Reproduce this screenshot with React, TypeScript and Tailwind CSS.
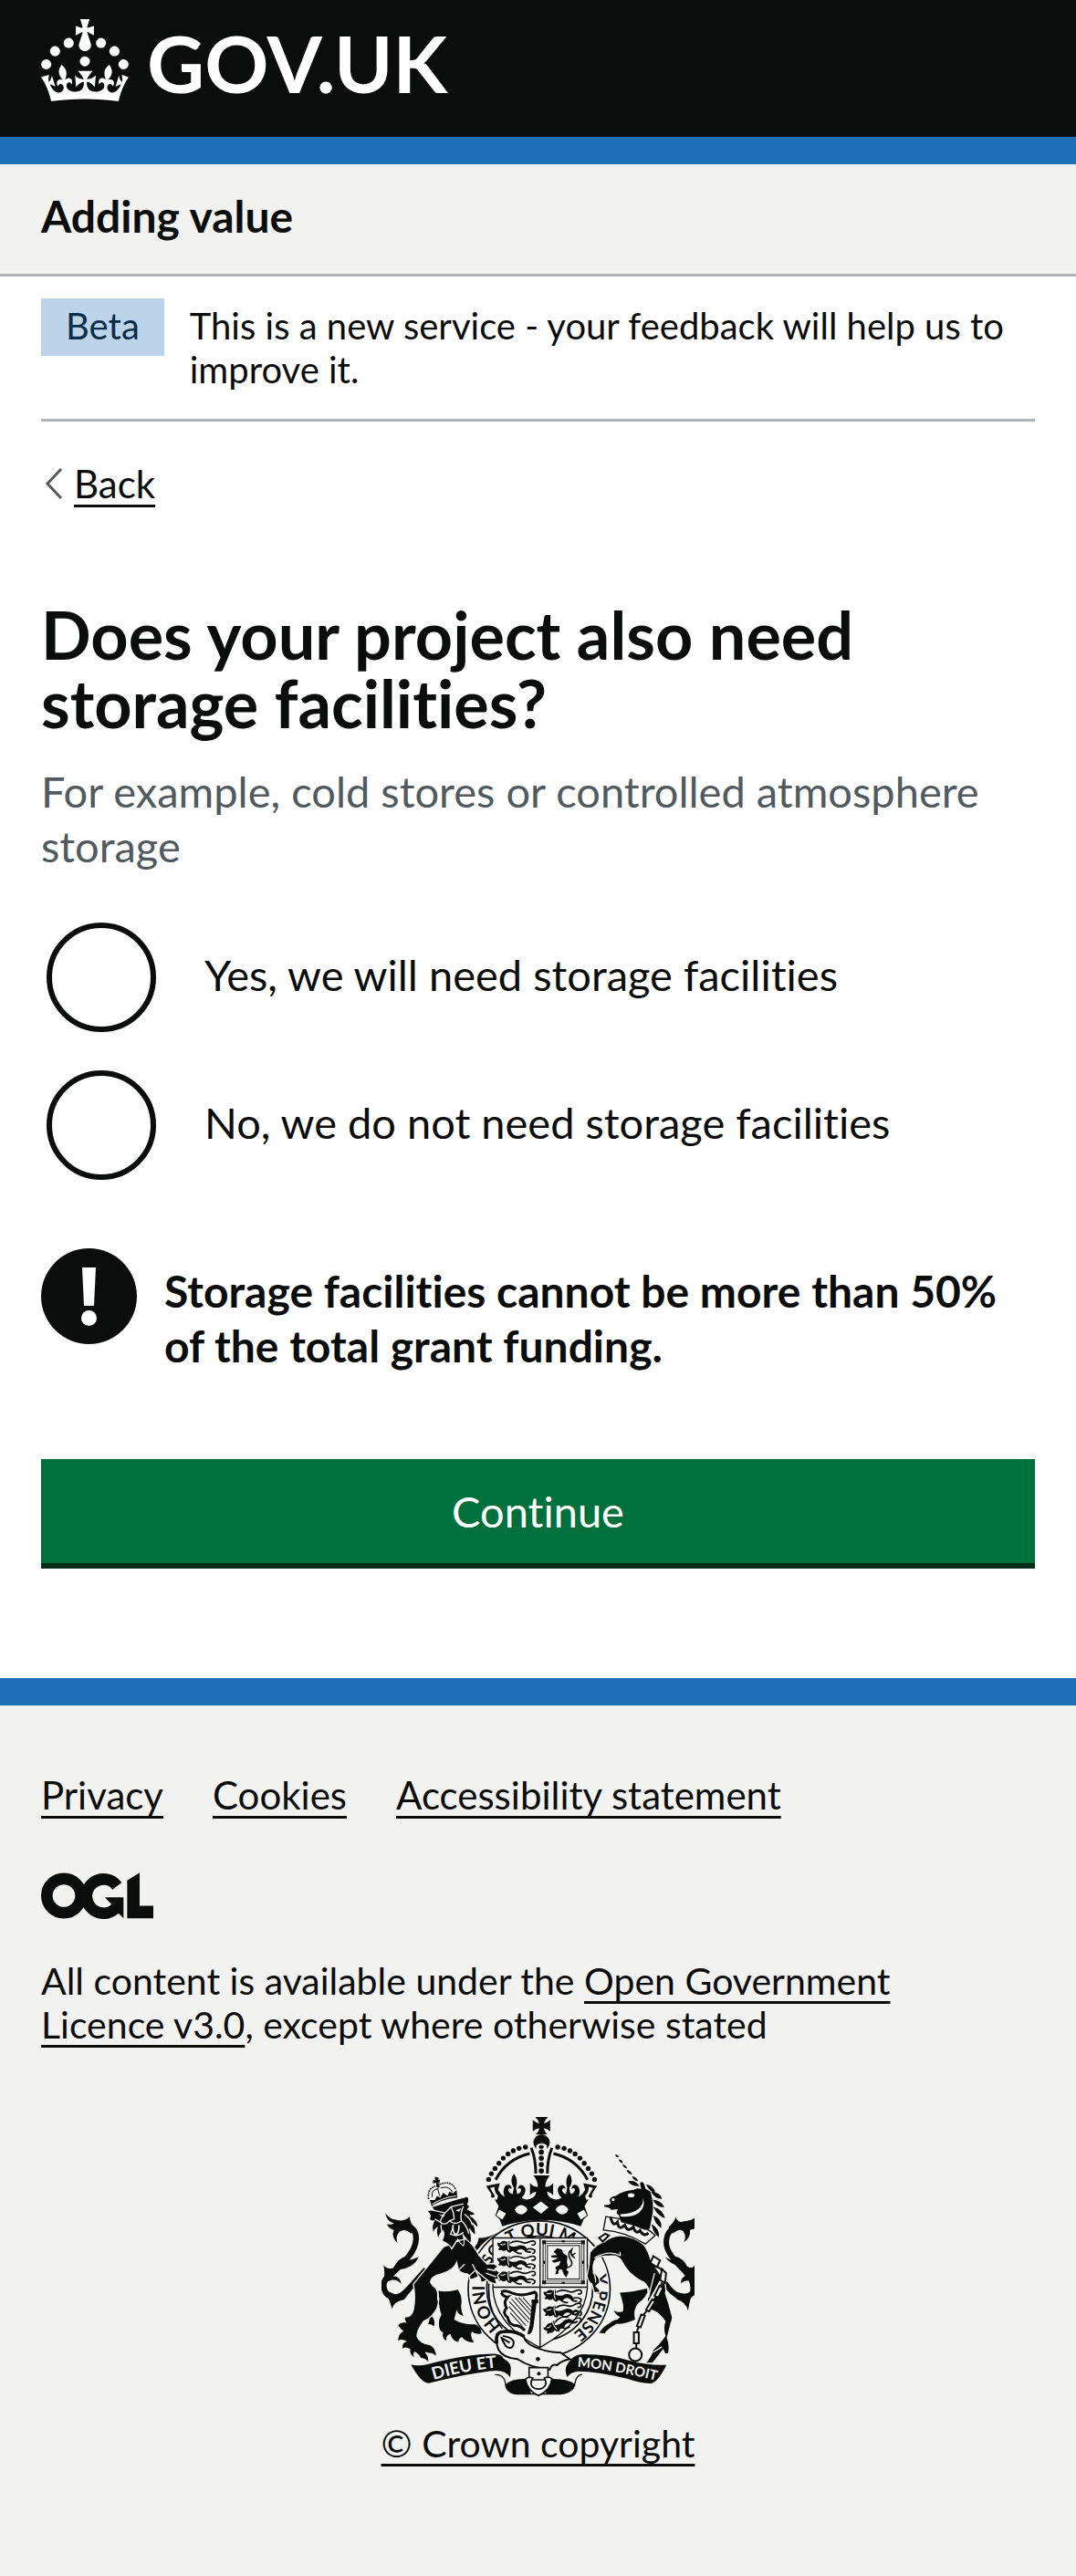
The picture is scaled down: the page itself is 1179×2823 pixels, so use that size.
import type { ReactNode } from 'react';

const INK = '#0b0c0c';
const PAPER = '#f2f2f0';

function CrownIcon() {
  return (
    <svg className="h-[90px] w-[96px] shrink-0" viewBox="0 0 32 30" fill="currentColor" aria-hidden="true">
      <path
        fillRule="evenodd"
        clipRule="evenodd"
        d="M22.6 10.4c-1 .4-2-.1-2.4-1-.4-.9.1-2 1-2.4.9-.4 2 .1 2.4 1s-.1 2-1 2.4m-5.9 6.7c-.9.4-2-.1-2.4-1-.4-.9.1-2 1-2.4.9-.4 2 .1 2.4 1s-.1 2-1 2.4m10.8-3.7c-1 .4-2-.1-2.4-1-.4-.9.1-2 1-2.4.9-.4 2 .1 2.4 1s0 2-1 2.4m3.3 4.8c-1 .4-2-.1-2.4-1-.4-.9.1-2 1-2.4.9-.4 2 .1 2.4 1s-.1 2-1 2.4M17 4.7l2.3 1.2V2.5l-2.3.7-.2-.2.9-3h-3.4l.9 3-.2.2c-.1.1-2.3-.7-2.3-.7v3.4L15 4.7c.1.1.1.2.2.2l-1.3 4c-.1.2-.1.4-.1.6 0 1.1.8 2 1.9 2.2h.7c1-.2 1.9-1.1 1.9-2.1 0-.2 0-.4-.1-.6l-1.3-4c-.1-.2 0-.2.1-.3m-7.6 5.7c.9.4 2-.1 2.4-1 .4-.9-.1-2-1-2.4-.9-.4-2 .1-2.4 1s0 2 1 2.4m-5 3c.9.4 2-.1 2.4-1 .4-.9-.1-2-1-2.4-.9-.4-2 .1-2.4 1s.1 2 1 2.4m-3.2 4.8c.9.4 2-.1 2.4-1 .4-.9-.1-2-1-2.4-.9-.4-2 .1-2.4 1s0 2 1 2.4m14.8 11c4.4 0 8.6.3 12.3.8 1.1-4.5 2.4-7 3.7-8.8l-2.5-.9c.2 1.3.3 1.9 0 2.7-.4-.4-.8-1.1-1.1-2.3l-1.2 4c.7-.5 1.3-.8 2-.9-1.1 2.5-2.6 3.1-3.5 3-1.1-.2-1.7-1.2-1.5-2.1.3-1.2 1.5-1.5 2.1-.1 1.1-2.3-.8-3-2-2.3 1.9-1.9 2.1-3.5.6-5.6-2.1 1.6-2.1 3.2-1.2 5.5-1.2-1.4-3.2-.6-2.5 1.6.9-1.4 2.1-.5 1.9.8-.2 1.1-1.7 2.1-3.5 1.9-2.7-.2-2.9-2.1-2.9-3.6.7-.1 1.9.5 2.9 1.9l.4-4.3c-1.1 1.1-2.1 1.4-3.2 1.4.4-1.2 2.1-3 2.1-3h-5.4s1.7 1.9 2.1 3c-1.1 0-2.1-.2-3.2-1.4l.4 4.3c1-1.4 2.2-2 2.9-1.9-.1 1.5-.2 3.4-2.9 3.6-1.9.2-3.4-.8-3.5-1.9-.2-1.3 1-2.2 1.9-.8.7-2.3-1.2-3-2.5-1.6.9-2.2.9-3.9-1.2-5.5-1.5 2-1.3 3.7.6 5.6-1.2-.7-3.1 0-2 2.3.6-1.4 1.8-1.1 2.1.1.2.9-.3 1.9-1.5 2.1-.9.2-2.4-.5-3.5-3 .6 0 1.2.3 2 .9l-1.2-4c-.3 1.1-.7 1.9-1.1 2.3-.3-.8-.2-1.4 0-2.7l-2.9.9C1.3 23 2.6 25.5 3.7 30c3.7-.5 7.9-.8 12.3-.8"
      />
    </svg>
  );
}

function OglLogo() {
  return (
    <svg className="h-[51px] w-[123px]" viewBox="15 36 369 152" role="img" aria-label="Open Government Licence">
      <g fill="none" stroke={INK} strokeWidth="38">
        <circle cx="90" cy="112" r="56" />
        <path d="M265 80A56 56 0 1 0 258 155" />
      </g>
      <path fill={INK} d="M225 117h61v69l-18-18-26-12 4-16z" />
      <path fill={INK} d="M298 62l41-26v109h45v41h-86z" />
    </svg>
  );
}

/* A lion passant, drawn three to a quarter on the shield. */
function Passant({ x, y, turn = 0 }: { x: number; y: number; turn?: number }) {
  return (
    <g transform={`translate(${x} ${y}) rotate(${turn})`}>
      <path
        fill={INK}
        d="M2 6Q10 10 14 4Q24 -2 32 4L42 0Q44 10 40 16Q52 22 66 18Q76 12 90 17Q100 22 98 32Q106 36 112 34L112 40Q96 42 90 32Q80 24 70 30Q64 40 50 34L44 40Q34 38 32 30Q22 38 14 30Q8 34 4 28Q10 26 8 20Q0 16 2 6Z"
      />
      <path
        fill="none"
        stroke={INK}
        strokeWidth="5"
        d="M44 8Q60 -2 78 4Q94 12 108 3Q124 -2 126 6Q128 16 114 14M58 34Q66 44 82 42M96 30Q114 22 125 32Q126 42 116 42"
      />
      <path fill="none" stroke={PAPER} strokeWidth="3" d="M38 2Q34 16 40 32M12 12Q20 16 28 10" />
    </g>
  );
}

function HalfCrown() {
  const pearls = [[526, 156], [505, 160], [486, 168], [469, 178], [453, 192], [439, 209], [426, 226], [414, 243], [405, 262]];
  return (
    <g>
      {pearls.map(([cx, cy]) => (
        <circle key={cx} cx={cx} cy={cy} r="8" fill={INK} />
      ))}
      <path d="M540 177Q464 195 428 263" fill="none" stroke={INK} strokeWidth="9" />
      <path d="M545 158Q560 195 560 243" fill="none" stroke={INK} strokeWidth="9" />
      <path
        fill={INK}
        d="M397 283L442 274L436 296Q444 312 458 320Q450 300 458 286Q464 278 474 280Q482 284 480 294Q474 288 470 294Q468 306 484 310L488 290Q472 266 488 243Q504 264 495 290L499 310Q514 306 511 294Q506 288 500 294Q502 280 513 280Q527 284 526 300Q524 312 514 322Q526 332 541 326Q560 320 561 302Q549 304 541 314L541 274Q553 288 567 286Q566 266 552 249H582V395Q510 396 450 416L441 393L427 381L438 350L426 330L430 316Q420 326 413 320L414 310Z"
      />
      <path fill={PAPER} d="M440 361L462 374L450 394L430 380ZM491 361Q500 345 514 346Q528 350 533 361Q524 376 511 377Q497 375 491 361Z" />
      <path fill={PAPER} d="M410 290L426 318L420 322L432 330L436 316Q424 304 424 286Z" />
    </g>
  );
}

function TopCrown() {
  return (
    <g>
      <circle cx="579" cy="141" r="27" fill={INK} />
      <path fill={INK} d="M558 57H600Q590 67 586 78Q597 77 607 67V104Q597 95 586 94Q588 105 598 114H560Q570 105 572 94Q561 95 550 104V67Q561 77 572 78Q569 67 558 57Z" />
      <path d="M562 150Q579 135 596 150L606 244H552Z" fill={PAPER} />
      <HalfCrown />
      <g transform="translate(1158 0) scale(-1 1)">
        <HalfCrown />
      </g>
      <path d="M577 334L602 354L577 375L550 354Z" fill={PAPER} />
      {[153, 172, 192, 213, 234].map((cy) => (
        <circle key={cy} cx="578" cy={cy} r="8.5" fill={INK} />
      ))}
      <path d="M563 158A16 16 0 0 1 593 158" fill="none" stroke={PAPER} strokeWidth="4" />
    </g>
  );
}

function Lion() {
  return (
    <g fill={INK}>
      {/* tail */}
      <path fill="none" stroke={INK} strokeWidth="19" d="M200 558C150 610 128 652 92 650C60 642 50 604 74 582C106 554 166 508 167 456C167 424 144 410 116 410" />
      <path d="M67 373Q79 392 103 395Q130 402 146 384Q145 404 164 424L150 440Q130 420 112 434Q98 450 106 471Q84 452 94 428Q78 424 71 408Q86 412 94 406Q68 398 67 373Z" />
      <path d="M176 516Q160 552 112 558L92 580Q116 580 118 606Q108 590 88 592L60 602Q66 570 60 543Q74 560 92 552Q110 520 134 514Q130 524 134 530Q152 526 176 516Z" />
      <path d="M60 624Q76 644 88 687Q94 662 128 656L152 626L100 640Z" />
      {/* far hind leg */}
      <path d="M240 628Q270 634 304 624Q320 646 315 674Q313 692 322 710Q304 706 300 690L292 722Q320 740 362 738Q380 744 382 768Q362 772 350 762Q342 778 357 797Q332 798 318 780Q306 784 306 796Q284 790 280 770Q264 772 266 792Q250 782 256 764Q238 760 243 722L250 706Q240 680 240 628Z" />
      <path d="M212 704Q232 720 226 744Q214 736 206 738Q214 720 212 704Z" />
      {/* body, fore and hind legs */}
      <path d="M350 494Q374 470 372 454Q400 456 436 436Q390 462 364 498Z" />
      <path
        stroke={PAPER}
        strokeWidth="4"
        d="M256 484L328 455Q352 470 374 512L400 540L420 538L437 548L426 556L442 568L434 578L440 590L428 590L432 606Q412 604 400 592Q388 602 378 598Q382 588 372 580Q354 592 342 590Q346 578 334 572Q318 572 306 560L300 535Q292 560 250 572Q216 580 214 598Q220 612 232 618Q248 650 236 684Q220 716 192 728Q170 756 170 778Q180 802 212 804Q236 816 234 846Q222 832 208 834L198 830Q212 844 208 864Q196 850 182 850Q172 834 162 830Q158 836 164 850Q142 838 146 820Q128 810 122 822Q116 800 132 794Q112 784 106 798Q104 770 122 760Q108 748 106 740Q116 728 132 730Q124 718 132 712Q150 716 158 690Q166 650 158 606Z"
      />
      {/* mane and head */}
      <path
        stroke={PAPER}
        strokeWidth="3"
        d="M203 366Q212 360 226 364L218 352L302 327L336 318Q344 330 336 344L344 352L336 360L362 374Q356 382 344 380Q372 398 370 420Q362 416 352 404Q366 430 360 446Q350 436 342 424Q352 450 346 472Q332 460 320 442Q328 470 322 480Q310 472 304 458L284 490Q276 474 252 464Q262 446 256 430Q242 440 242 458Q230 440 236 420Q222 432 226 444Q214 420 226 398Q208 400 212 386Q218 380 203 366Z"
      />
      <g fill="none" stroke={PAPER} strokeWidth="4">
        <path d="M226 364L262 372L282 352L322 342M262 372Q250 384 246 402Q262 416 276 398Q296 414 316 398Q310 376 322 350M282 352Q292 372 292 392L276 398M250 410Q246 426 256 440M292 410L280 442Q304 452 322 436M316 398Q336 416 340 440M326 376Q346 390 352 412M246 402L228 392M284 490L300 464L330 458M338 582L362 560Q382 578 400 592M372 580L352 540M306 560L326 540M214 598L238 626V660M400 556L428 562M396 570L430 582" />
      </g>
      <path d="M288 412Q286 430 294 442Q308 444 308 412" fill={INK} stroke={PAPER} strokeWidth="5" />
      <path d="M242 376L262 380L256 386ZM296 364L316 356L308 368Z" fill={PAPER} />
      {/* small crown */}
      <path d="M212 330L218 350Q250 326 302 322L300 296L288 308L276 302L270 316L256 306L246 322L236 316L228 330Z" />
      <path d="M220 344Q250 322 298 316" fill="none" stroke={PAPER} strokeWidth="3" />
      <path fill="none" stroke={INK} strokeWidth="5" strokeDasharray="5 3" d="M208 326Q202 288 238 282M244 278Q284 264 296 294" />
      <path fill="none" stroke={INK} strokeWidth="3" d="M220 320Q214 298 238 292L244 316M248 290Q276 282 286 304" />
      <path d="M228 253L242 257L238 264L245 262L244 274L237 270Q248 282 242 290L234 286L233 273L222 275L223 263L230 265Z" />
    </g>
  );
}

function Unicorn() {
  return (
    <g fill={INK}>
      {/* tail */}
      <path fill="none" stroke={INK} strokeWidth="18" d="M984 602C1016 652 1050 656 1074 636C1086 590 1054 570 1022 534C992 500 982 478 992 446C1002 420 1030 408 1083 404" />
      <path d="M1020 384Q1016 402 996 418L1010 440Q1032 420 1044 432Q1056 450 1046 468Q1070 452 1066 428L1083 424V388Q1060 402 1036 402Q1020 398 1020 384Z" />
      <path d="M984 516Q1000 540 1036 548L1060 576Q1036 580 1036 604Q1046 592 1083 594V540Q1074 560 1056 546Q1044 522 1018 514Q1024 526 1016 530Q1000 526 984 516Z" />
      <path d="M1083 616Q1066 650 1060 692Q1052 664 1024 656L1000 628L1060 640Z" />
      {/* far legs */}
      <path d="M836 634Q880 632 932 618Q924 650 896 668Q878 690 886 722Q850 738 826 736Q796 752 786 768L768 766Q784 742 800 736Q812 724 828 722Q856 700 844 660Z" />
      <path d="M816 692Q836 704 858 690L846 716Q824 712 816 692Z" />
      {/* body */}
      <path
        stroke={PAPER}
        strokeWidth="4"
        d="M737 502Q760 472 786 466Q806 448 838 446Q884 450 914 476Q928 492 938 526L980 590Q990 612 986 636Q998 670 1006 704Q1012 716 1004 734L992 782Q1002 806 996 834L984 836L978 822L944 866H918Q938 846 944 822Q968 800 984 776Q976 750 984 728Q960 694 934 690Q920 670 930 640Q938 614 906 596Q860 570 842 530Q830 510 800 514Q774 512 758 522Q744 540 750 566Q770 580 770 602L758 612Q768 620 772 632L752 634L744 606Q730 598 728 578Q738 540 737 502Z"
      />
      <path fill="none" stroke={PAPER} strokeWidth="4" d="M752 520Q800 492 838 512M838 512L836 500M908 596Q926 600 930 640M748 566Q758 580 756 600M944 830L974 812M930 650Q942 600 950 570" />
      {/* collar */}
      <path d="M790 384L782 428Q850 432 920 474L952 446L936 432Q870 392 790 384Z" fill={PAPER} stroke={INK} strokeWidth="4" />
      <path d="M806 386Q812 420 828 402Q832 432 852 412Q862 438 880 418Q888 444 902 430Q914 452 930 438" fill="none" stroke={INK} strokeWidth="9" />
      {/* head */}
      <path d="M784 346Q796 348 806 342L802 328Q806 318 822 316Q850 298 882 296Q892 288 906 294L902 274Q914 262 920 292L936 302Q948 336 944 372L934 424L918 428Q880 410 840 402L832 378Q820 374 830 360L806 362Q808 354 786 352Z" />
      <path d="M838 376Q876 376 896 360Q914 346 912 324Q922 350 900 370Q876 388 838 384Z" fill={PAPER} />
      <ellipse cx="873" cy="314" rx="11" ry="7" fill={PAPER} />
      <circle cx="814" cy="328" r="5" fill={PAPER} />
      <path d="M922 278Q950 284 952 306Q932 302 922 278ZM938 302Q968 304 974 326Q950 326 938 302ZM944 328Q974 332 982 354Q954 352 944 328ZM946 352Q978 360 984 390Q956 378 946 352ZM946 380Q976 392 972 422Q950 408 946 380ZM940 408Q968 424 964 452Q944 436 940 408ZM862 268Q888 262 900 284Q876 286 862 268ZM876 252Q892 254 896 268Q880 266 876 252Z" />
      <path d="M820 181Q832 180 832 189Q824 190 820 181ZM832 196Q844 196 846 208Q836 208 832 196ZM844 213Q856 214 860 226Q848 225 844 213ZM858 231Q872 232 876 246Q862 245 858 231Z" />
      {/* chain */}
      <path d="M955 524L980 585L916 700L890 800" fill="none" stroke={PAPER} strokeWidth="14" />
      <g fill={PAPER} stroke={INK} strokeWidth="6">
        <path d="M946 514L968 528L958 550L936 536Z" />
        <path d="M974 556L988 570L984 602L968 592Z" />
        <path d="M966 612L978 618L962 650L950 644Z" />
        <path d="M942 656L952 662L932 696L922 690Z" />
        <path d="M906 706L918 710L904 748L892 744Z" />
        <path d="M882 764H898V800H882Z" />
        <path d="M958 548L976 560M974 600L970 614M956 646L946 660M926 692L912 708M898 746L890 766M890 798V818" />
        <circle cx="887" cy="838" r="21" />
        <path d="M768 454L788 440L800 446L780 466Z" />
      </g>
    </g>
  );
}

function Shield() {
  return (
    <g>
      {/* garter */}
      <ellipse cx="571" cy="622" rx="233" ry="224" fill={PAPER} stroke={INK} strokeWidth="5" />
      <ellipse cx="573" cy="620" rx="174" ry="172" fill={PAPER} stroke={INK} strokeWidth="5" />
      <path id="garter-left" d="M573 794A181 174 0 0 1 392 620A181 174 0 0 1 573 446A181 174 0 0 1 754 620" fill="none" />
      <path id="garter-right" d="M573 442A184 180 0 0 1 757 622A184 180 0 0 1 573 802" fill="none" />
      <g fill={INK} fontFamily="Lato, sans-serif" fontWeight="700" fontSize="56">
        <text><textPath href="#garter-left" startOffset="140">HONI</textPath></text>
        <text fontSize="50"><textPath href="#garter-left" startOffset="356">SO</textPath></text>
        <text><textPath href="#garter-left" startOffset="453">T QUI M</textPath></text>
        <text fontSize="54"><textPath href="#garter-right" startOffset="240">Y</textPath></text>
        <text fontSize="54"><textPath href="#garter-right" startOffset="288">PENSE</textPath></text>
      </g>
      {/* shield and quarters */}
      <path d="M419 454H729V620Q722 730 574 814Q426 740 419 620Z" fill={PAPER} stroke={INK} strokeWidth="4" />
      <path d="M574 454V814M419 616H729" stroke={INK} strokeWidth="4" />
      <Passant x={432} y={463} />
      <Passant x={432} y={513} />
      <Passant x={432} y={563} />
      <Passant x={584} y={624} />
      <Passant x={582} y={680} turn={-6} />
      <Passant x={580} y={744} turn={-26} />
      {/* rampant lion in a double tressure */}
      <rect x="584" y="465" width="134" height="138" fill="none" stroke={INK} strokeWidth="3" />
      <rect x="591" y="472" width="120" height="124" fill="none" stroke={INK} strokeWidth="2" />
      <rect x="598" y="479" width="106" height="110" fill="none" stroke={INK} strokeWidth="3" />
      <path fill={INK} d="M581 462h12v12h-12zM709 462h12v12h-12zM581 594h12v12h-12zM709 594h12v12h-12zM645 462h10v6h-10zM645 599h10v6h-10zM584 529h6v10h-6zM712 529h6v10h-6z" />
      <path
        fill={INK}
        d="M618 500L630 488L646 492L650 504L664 514L662 534Q668 550 660 558L668 566L660 584L652 574L646 558Q632 554 634 572L624 574L628 558Q618 550 636 544L642 530L620 536L612 530L634 520L610 518L612 512L630 510Z"
      />
      <path fill="none" stroke={INK} strokeWidth="5" d="M658 552Q690 548 672 522Q662 504 678 492Q670 510 688 520M678 512L690 504" />
      {/* harp */}
      <path fill="none" stroke={INK} strokeWidth="9" d="M446 632Q462 624 484 636Q514 648 556 632Q566 636 560 656M446 634Q456 650 468 648Q452 664 464 684Q448 700 468 716Q470 736 490 742Q506 740 524 758" />
      <path fill={INK} d="M548 656H564L552 746Q546 774 532 770L540 740ZM546 656H568V668H546Z" />
      <path stroke={INK} strokeWidth="3" d="M480 654L540 722M492 650L544 708M504 650L546 696M518 650L548 684M474 664L536 732M472 680L528 742M476 700L516 744" />
      {/* belt */}
      <path d="M406 604Q400 692 450 752" fill="none" stroke={INK} strokeWidth="5" />
      <path d="M432 770Q448 758 482 762L520 776Q524 800 556 812Q600 832 640 830L672 852Q646 856 630 872Q612 866 606 886Q540 880 500 852Q452 848 438 822Q428 800 432 770Z" fill={PAPER} stroke={INK} strokeWidth="6" />
      <path d="M432 800Q426 764 452 762Q490 756 522 778" fill="none" stroke={INK} strokeWidth="11" />
      <path d="M452 776Q494 782 486 806Q480 822 462 810L448 786M474 798L444 780" fill="none" stroke={INK} strokeWidth="6" />
      <circle cx="516" cy="827" r="7" fill={INK} />
      <circle cx="567" cy="852" r="7" fill={INK} />
    </g>
  );
}

function Scroll() {
  return (
    <g>
      <path d="M426 903Q456 902 460 930Q462 966 500 967H640Q682 962 690 926Q692 908 712 902" fill={PAPER} stroke={INK} strokeWidth="4" />
      <path d="M460 936Q486 912 538 918L544 967H500Q462 964 460 936ZM690 936Q664 914 600 918L592 967H640Q684 964 690 936Z" fill={INK} />
      <path d="M150 870Q176 876 208 868Q330 836 424 835Q448 836 454 850Q480 866 478 884L476 912Q462 890 430 890Q360 894 208 931Q184 932 150 870Z" fill={INK} />
      <path d="M664 912Q650 884 668 862Q684 836 716 836Q800 836 872 858Q930 874 989 871Q960 930 936 932Q900 930 860 916Q760 892 700 892Q672 894 664 912Z" fill={INK} />
      <path d="M538 880H600V920H538Z" fill={PAPER} stroke={INK} strokeWidth="5" />
      <circle cx="570" cy="900" r="6" fill={INK} />
      <path d="M526 918Q536 908 550 914Q536 938 556 948Q570 954 584 946Q600 936 588 914Q602 908 613 916Q608 956 569 972Q532 956 526 918Z" fill={PAPER} stroke={INK} strokeWidth="5" />
      <g fill={PAPER} fontFamily="Lato, sans-serif" fontWeight="700">
        <path id="motto-left" d="M224 920Q330 888 440 880" fill="none" />
        <text fontSize="56"><textPath href="#motto-left">DIEU ET</textPath></text>
        <path id="motto-right" d="M696 878Q800 884 960 924" fill="none" />
        <text fontSize="45"><textPath href="#motto-right">MON DROIT</textPath></text>
      </g>
    </g>
  );
}

function RoyalArms() {
  return (
    <svg className="block h-[307px] w-full" viewBox="54 54 1029 920" aria-hidden="true">
      <Shield />
      <Lion />
      <Unicorn />
      <TopCrown />
      <Scroll />
    </svg>
  );
}

function TextLink({ children }: { children: ReactNode }) {
  return (
    <a href="#" className="underline decoration-[3px] underline-offset-[7px]">
      {children}
    </a>
  );
}

function RadioItem({ id, label }: { id: string; label: string }) {
  return (
    <div className="ml-1.5 flex items-center gap-[53px]">
      <input
        id={id}
        type="radio"
        name="storage"
        value={id}
        className="size-[120px] shrink-0 appearance-none rounded-full border-[6px] border-[#0b0c0c] bg-transparent checked:bg-[#0b0c0c] checked:shadow-[inset_0_0_0_24px_white]"
      />
      <label htmlFor={id} className="pb-1.5 text-[47px] leading-[60px]">
        {label}
      </label>
    </div>
  );
}

export default function App() {
  return (
    <div className="bg-white font-[Lato,sans-serif] text-[#0b0c0c] [font-variant-ligatures:none]">
      <header className="border-b-[30px] border-[#1d70b8] bg-[#0b0c0c] px-[45px] pt-[21px] pb-[39px] text-white">
        <a href="#" className="flex items-start gap-5">
          <CrownIcon />
          <span className="-mb-1.5 text-[87px] leading-[96px] font-bold">GOV.UK</span>
        </a>
      </header>

      <div className="border-b-[3px] border-[#b1b4b6] bg-[#f2f2f0] px-[45px] pt-[27px] pb-[33px]">
        <a href="#" className="block text-[48px] leading-[60px] font-bold">
          Adding value
        </a>
      </div>

      <div className="px-[45px]">
        <div className="flex items-start gap-7 border-b-[3px] border-[#b1b4b6] pt-6 pb-[30px] text-[40px] leading-[48px]">
          <strong className="bg-[#bbd4ea] px-[27px] pt-1.5 pb-[9px] font-normal text-[#0c2d4a]">Beta</strong>
          <p className="pt-1.5">This is a new service - your feedback will help us to improve it.</p>
        </div>

        <a href="#" className="mt-11 inline-flex items-center gap-3 text-[42px] leading-[48px]">
          <svg className="ml-1 h-9 w-5" viewBox="0 0 20 36" fill="none" stroke="#505a5f" strokeWidth="3" aria-hidden="true">
            <path d="M18 2L3 18L18 34" />
          </svg>
          <span className="underline decoration-[3px] underline-offset-[7px]">Back</span>
        </a>

        <main className="pt-[104px]">
          <form onSubmit={(event) => event.preventDefault()}>
            <fieldset aria-describedby="storage-hint">
              <legend>
                <h1 className="text-[72px] leading-[75px] font-bold">Does your project also need storage facilities?</h1>
              </legend>
              <p id="storage-hint" className="mt-[29px] text-[47px] leading-[60px] text-[#505a5f]">
                For example, cold stores or controlled atmosphere storage
              </p>
              <div className="mt-[54px] flex flex-col gap-[42px]">
                <RadioItem id="yes" label="Yes, we will need storage facilities" />
                <RadioItem id="no" label="No, we do not need storage facilities" />
              </div>
            </fieldset>

            <div className="mt-[75px] flex items-start gap-[30px]">
              <svg className="size-[105px] shrink-0" viewBox="0 0 105 105" aria-hidden="true">
                <circle cx="52.5" cy="52.5" r="52.5" fill={INK} />
                <path d="M45 21H60L58 63H47Z" fill="#fff" />
                <circle cx="52.5" cy="76.5" r="8.5" fill="#fff" />
              </svg>
              <strong className="pt-[17px] text-[48px] leading-[60px] font-bold">
                Storage facilities cannot be more than 50% of the total grant funding.
              </strong>
            </div>

            <button
              type="submit"
              className="mt-[94px] block w-full border-b-[6px] border-[#002d18] bg-[#00703c] py-[27px] text-center text-[47px] leading-[60px] text-white"
            >
              Continue
            </button>
          </form>
        </main>
      </div>

      <footer className="mt-[120px] border-t-[30px] border-[#1d70b8] bg-[#f2f2f0] px-[45px] pt-[74px] pb-[121px] text-[41px] leading-[48px]">
        <nav className="flex flex-wrap gap-x-[54px] gap-y-4 text-[42px]">
          <TextLink>Privacy</TextLink>
          <TextLink>Cookies</TextLink>
          <TextLink>Accessibility statement</TextLink>
        </nav>
        <div className="mt-[61px]">
          <OglLogo />
        </div>
        <p className="mt-11 pr-[60px]">
          All content is available under the <TextLink>Open Government Licence v3.0</TextLink>, except where otherwise stated
        </p>
        <div className="mt-[76px] flex justify-center">
          <a href="#" className="underline decoration-[3px] underline-offset-[7px]">
            <RoyalArms />
            <span className="mt-7 block">© Crown copyright</span>
          </a>
        </div>
      </footer>
    </div>
  );
}
